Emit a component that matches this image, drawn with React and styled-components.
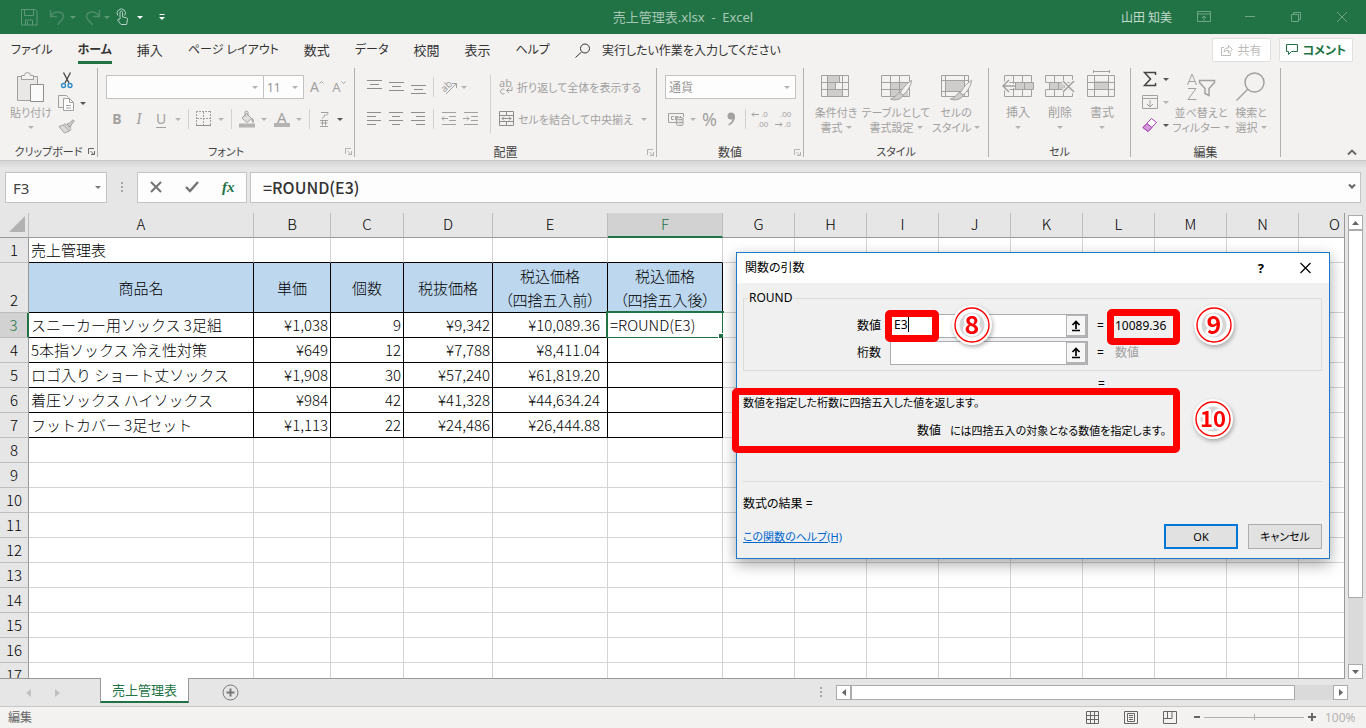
import React from 'react';
import styled, { createGlobalStyle, css } from 'styled-components';

const GlobalStyle = createGlobalStyle`
  * { box-sizing: border-box; }
  html, body, #root { height: 100%; }
  body {
    margin: 0;
    overflow: hidden;
    font-family: 'Noto Sans', 'Noto Sans CJK JP', sans-serif;
    font-size: 12px;
    color: #333333;
  }
  button, input, select { font: inherit; color: inherit; }
  button { font-feature-settings: 'palt'; }
`;

const Window = styled.div`
  display: flex;
  flex-direction: column;
  height: 100vh;
  background: #e6e6e6;
`;

const Svg = styled.svg`
  display: block;
  flex: none;
  overflow: visible;
  fill: none;
  stroke: currentColor;
`;

const Icon = ({ w = 16, h = w, children, ...rest }) => (
  <Svg width={w} height={h} viewBox={`0 0 ${w} ${h}`} aria-hidden="true" {...rest}>
    {children}
  </Svg>
);

const Caret = styled.span`
  flex: none;
  width: 0;
  height: 0;
  border: 3px solid transparent;
  border-top-color: ${props => props.$color || '#b5b3b1'};
  border-bottom-width: 0;
`;

const PlainButton = styled.button`
  display: flex;
  align-items: center;
  justify-content: center;
  gap: ${props => props.$gap || 0}px;
  padding: 0;
  border: 0;
  background: none;
  color: ${props => props.$color || 'inherit'};
  white-space: nowrap;
`;

/* title bar */

const TitleBar = styled.header`
  display: grid;
  grid-template-columns: 1fr auto 1fr;
  align-items: center;
  height: 34px;
  flex: none;
  background: #217346;
  color: #a6c7b5;
`;

const QuickAccess = styled.div`
  display: flex;
  align-items: center;
  gap: 5px;
  padding-left: 21px;
`;

const TitleText = styled.div`
  font-size: 13px;
  line-height: 18px;
  white-space: pre;
`;

const WindowButtons = styled.div`
  display: flex;
  align-items: center;
  justify-content: flex-end;
  gap: 32px;
  padding-right: 17px;
`;

const UserName = styled.span`
  margin-right: -7px;
  color: #c3dacd;
`;

/* tabs */

const TabRow = styled.nav`
  display: flex;
  align-items: center;
  height: 32px;
  flex: none;
  padding: 0 13px 0 11px;
  background: #f3f2f1;
`;

const TabButton = styled.button`
  height: 27px;
  margin-right: 25px;
  padding: 0;
  border: 0;
  border-top: 3px solid transparent;
  border-bottom: 3px solid ${props => (props.$active ? '#217346' : 'transparent')};
  background: none;
  font-size: ${props => (props.$kanji ? 13 : 12)}px;
  font-weight: ${props => (props.$active ? 700 : 400)};
  line-height: 20px;
  white-space: nowrap;
`;

const TellMe = styled.label`
  display: flex;
  align-items: center;
  gap: 11px;
  flex: 1;
`;

const TellMeInput = styled.input`
  width: 220px;
  padding: 0;
  border: 0;
  background: none;
  font-feature-settings: 'palt';
  &::placeholder { color: #333333; opacity: 1; }
`;

const ShareButton = styled.button`
  display: flex;
  align-items: center;
  gap: 5px;
  height: 24px;
  margin-left: 8px;
  padding: 0 ${props => (props.$active ? 6 : 8)}px;
  border: 1px solid #e1dfdd;
  border-radius: 2px;
  background: #ffffff;
  color: ${props => (props.$active ? '#217346' : '#bdbbb9')};
  font-weight: ${props => (props.$active ? 700 : 400)};
  white-space: nowrap;
`;

/* ribbon */

const Ribbon = styled.div`
  display: flex;
  align-items: flex-start;
  height: 95px;
  flex: none;
  padding-top: 2px;
  background: #f3f2f1;
  border-bottom: 1px solid #c8c8c8;
  color: #a3a19f;
`;

const Group = styled.section`
  display: flex;
  flex-direction: column;
  flex: none;
  width: ${props => props.$width}px;
  height: 89px;
  border-right: 1px solid #b3b0ad;
`;

const GroupBody = styled.div`
  display: flex;
  flex: 1;
  padding: ${props => props.$pad || '4px 8px 0'};
  gap: ${props => props.$gap || 0}px;
`;

const GroupFooter = styled.div`
  display: grid;
  grid-template-columns: 12px 1fr 12px;
  align-items: center;
  height: 16px;
  margin-bottom: -2px;
  color: #444444;
  font-size: ${props => (props.$kana ? 11 : 12)}px;
  text-align: center;
  font-feature-settings: 'palt';
  span { grid-column: 2; white-space: nowrap; }
`;

const Rows = styled.div`
  display: flex;
  flex-direction: column;
  gap: ${props => props.$gap || 8}px;
`;

const ToolRow = styled.div`
  display: flex;
  align-items: center;
  height: ${props => props.$h || 24}px;
  gap: ${props => props.$gap || 0}px;
  padding-left: ${props => props.$indent || 0}px;
`;

const Divider = styled.span`
  width: 1px;
  flex: none;
  height: ${props => props.$h || 20}px;
  margin: 0 ${props => props.$after || 0}px 0 ${props => props.$before || 0}px;
  background: #d2d0ce;
`;

const SelectBox = styled.span`
  position: relative;
  display: inline-flex;
  align-items: center;
  width: ${props => props.$width}px;
  height: ${props => props.$h || 24}px;
  flex: none;
  margin-left: ${props => (props.$joined ? '-1px' : 0)};
  border: 1px solid #c4c2c0;
  background: #fdfdfd;
  > span {
    position: absolute;
    right: 5px;
    pointer-events: none;
  }
`;

const Select = styled.select`
  appearance: none;
  width: 100%;
  height: 100%;
  padding: 0 ${props => props.$pad || 3}px;
  border: 0;
  background: none;
  color: ${props => props.$color || '#979593'};
  font-size: ${props => props.$size || 12}px;
`;

const Letter = styled.span`
  font-size: ${props => props.$size || 14}px;
  line-height: 16px;
  ${props => props.$bold && css`font-weight: 700;`}
  ${props => props.$italic && css`font-style: italic; font-family: 'Liberation Serif', serif;`}
  ${props => props.$underline && css`border-bottom: 1px solid;`}
  ${props => props.$bar && css`border-bottom: 4px solid #b5b3b1; padding: 0 3px; line-height: 12px;`}
`;

const LetterButton = styled(PlainButton)`
  width: ${props => props.$width || 22}px;
`;

const TextButton = styled(PlainButton)`
  font-size: 11px;
`;

const BigButton = styled.button`
  display: flex;
  flex-direction: column;
  align-items: center;
  flex: none;
  width: ${props => props.$width}px;
  padding: 0;
  border: 0;
  background: none;
  font-size: ${props => (props.$kanji ? 12 : 11)}px;
  line-height: 15px;
  white-space: nowrap;
  svg { margin-bottom: 2px; }
`;

const LabelLine = styled.span`
  display: flex;
  align-items: center;
  justify-content: center;
  gap: 3px;
  height: 15px;
`;

const CollapseButton = styled(PlainButton)`
  align-self: flex-end;
  margin: 0 9px 4px auto;
  color: #666666;
`;

const grey = '#cfcdcb';

const Launcher = ({ dark }) => (
  <PlainButton $color={dark ? '#666666' : '#b5b3b1'} aria-label="詳細">
    <Icon w={9} h={9}><path d="M1.5 7V1.5H7M3.5 4l3 3M7.5 4v3.5H4" /></Icon>
  </PlainButton>
);

const RibbonGroup = ({ label, width, pad, gap, kana, launcher, darkLauncher, children }) => (
  <Group $width={width}>
    <GroupBody $pad={pad} $gap={gap}>{children}</GroupBody>
    <GroupFooter $kana={kana}>
      <span>{label}</span>
      {launcher && <Launcher dark={darkLauncher} />}
    </GroupFooter>
  </Group>
);

const alignShapes = {
  top: 'M0 1.5h15M3 5.5h9M0 9.5h15',
  middle: 'M0 3.5h15M3 7.5h9M0 11.5h15',
  bottom: 'M0 6.5h15M3 10.5h9M0 14.5h15',
  left: 'M0 1.5h14M0 5.5h9M0 9.5h14M0 13.5h9',
  center: 'M0 1.5h14M3 5.5h8M0 9.5h14M3 13.5h8',
  right: 'M0 1.5h14M5 5.5h9M0 9.5h14M5 13.5h9',
};

const AlignButton = ({ kind }) => (
  <LetterButton $width={22} aria-label={kind}>
    <Icon w={15} h={16}><path d={alignShapes[kind]} stroke="#8f8d8b" /></Icon>
  </LetterButton>
);

const PasteIcon = () => (
  <Icon w={28} h={31}>
    <path d="M.5 4.5h20v24H.5z" fill="#e9e8e7" />
    <path d="M4.5 7.5v-4h3a3 3 0 0 1 6 0h3v4z" fill="#f3f2f1" />
    <path d="M13.5 12.5h13v17h-13z" fill="#fafafa" stroke="#8f8d8b" />
  </Icon>
);

const CutIcon = () => (
  <Icon w={12} h={17}>
    <path d="M2.5.5 8 11M9.5.5 4 11" stroke="#444444" strokeWidth="1.3" />
    <circle cx="2.5" cy="13.5" r="2" stroke="#2b88c9" strokeWidth="1.3" />
    <circle cx="9" cy="13.5" r="2" stroke="#2b88c9" strokeWidth="1.3" />
  </Icon>
);

const CopyIcon = () => (
  <Icon w={17} h={17} stroke="#333333">
    <path d="M5 12.500H.5V.5h8l2 2" />
    <path d="M5.500 3.500h6l4 4v8h-10z" fill="#ffffff" />
    <path d="M11.500 3.500v4h4M8 10.500h5M8 13h5" />
  </Icon>
);

const BrushIcon = () => (
  <Icon w={17} h={16}>
    <path d="m9 5 2.500-1L15 .8l1.300 1.300L13 6l-.5 2.500z" fill={grey} />
    <path d="m7 4.500 6 6-1.500 1.500-6-6zM5.500 6 1 7.500 6.500 14l5-2" fill="#dddbd9" />
  </Icon>
);

const BordersIcon = () => (
  <Icon w={16} h={16}>
    <path d="M.5 0v14M14.500 0v14M0 .5h15M7.500 1v13M1 7.500h13" strokeDasharray="2 1" />
    <path d="M0 14.500h15" stroke="#8f8d8b" />
  </Icon>
);

const FillIcon = () => (
  <Icon w={17} h={17}>
    <path d="m7.500 2.500 5 5-4.500 4-5-4.500zM6 6V1.500a1.500 1.500 0 0 1 3 0V5M13 7c2 2 1.500 4 1 4.500-.8-.5-1.200-2-1-4.500z" fill="#e3e1df" />
    <path d="M0 14.500h16" stroke="#b5b3b1" strokeWidth="4" />
  </Icon>
);

const RubyIcon = () => (
  <Icon w={13} h={17}>
    <path
      transform="translate(3 0)"
      d="M1 1.500h7c0 2-1 2.500-2.500 3M4.500 3.500c0 2-.5 3-2.500 4M0 9.500h8M2.500 9.500v5M5.500 9.500v5M.5 12h7M0 15.500h8"
    />
  </Icon>
);

const OrientationIcon = () => (
  <Icon w={17} h={16}>
    <text x="0" y="11" fontSize="10" fill="currentColor" stroke="none" transform="rotate(-45 5 8)">ab</text>
    <path d="m5 15 10-10M11 4.500h4.500V9" />
  </Icon>
);

const WrapIcon = () => (
  <Icon w={15} h={17}>
    <text x="0" y="8" fontSize="11" fill="currentColor" stroke="none">ab</text>
    <path d="M5.500 10.500a2.500 2.500 0 1 0 0 4M13 8v3.500H7.500M10 9l-2.500 2.500L10 14" />
  </Icon>
);

const MergeIcon = () => (
  <Icon w={16} h={16}>
    <path d="M.5.5h14v14H.5zM.5 4.500h14M.5 10.500h14M7.500.5v4M7.500 10.500v4M3 7.500h9M5 5.500l-2 2 2 2M10 5.500l2 2-2 2" stroke="#8f8d8b" />
  </Icon>
);

const IndentIcon = ({ flip }) => (
  <Icon w={16} h={16}>
    <path d="M1 1.500h14M8 5.500h7M8 9.500h7M1 13.500h14" />
    <path d={flip ? 'M0 7.500h6M4 5.500l2 2-2 2' : 'M1 7.500h6M3 5.500l-2 2 2 2'} />
  </Icon>
);

const CurrencyIcon = () => (
  <Icon w={17} h={15}>
    <path d="M8 10.500H.5v-9h15V5M6 4.500H3.500v3H6M7.500 8V4.500H10v1.500H8M12.500 4v1.500" />
    <path d="M8.500 6.500v6c0 1.500 6.500 1.500 6.500 0v-6c0-1.500-6.500-1.500-6.500 0 0 1.500 6.500 1.500 6.500 0M8.500 9.500c0 1.500 6.500 1.500 6.500 0" fill="#e3e1df" />
  </Icon>
);

const DecimalIcon = ({ less }) => (
  <Icon w={17} h={18}>
    <g fill="currentColor" stroke="none" fontFamily="'Liberation Sans', sans-serif" fontSize="8">
      <text x={less ? 5 : 9} y="7">{less ? '.00' : '.0'}</text>
      <text x={less ? 9 : 5} y="17">{less ? '.0' : '.00'}</text>
    </g>
    <path d={less ? 'M0 14.500h7M5 12.500l2 2-2 2' : 'M0 4.500h7M2 2.500l-2 2 2 2'} />
  </Icon>
);

const Brush = () => (
  <>
    <path d="M30.500 7.500c-4 2-9 8-11 12l2.500 2.500c4-3 8-9 8.500-14.500z" fill="#f3f2f1" />
    <path d="M19 19.500c-3 0-3.500 5-9.500 6.500 4 2 11.500.5 12.500-4z" fill={grey} />
  </>
);

const ConditionalIcon = () => (
  <Icon w={30} h={30}>
    <path d="M6 2h12v7H6zM6 9h8v7H6zM6 16h15v8H6z" fill={grey} stroke="none" />
    <path d="M.5 2.500h27v21H.5zM6.500 2.500v21M21.500 2.500v21M.5 9.500h27M.5 16.500h27M18.500 2.500v7M14.500 9.500v7" />
  </Icon>
);

const TableFormatIcon = () => (
  <Icon w={31} h={30}>
    <path d="M9 9h18v14H9z" fill={grey} stroke="none" />
    <path d="M.5 2.500h28v21H.5zM9.500 2.500v21M18.500 2.500v21M.5 9.500h28M.5 16.500h28" />
    <Brush />
  </Icon>
);

const CellStyleIcon = () => (
  <Icon w={31} h={30}>
    <path d="M5 7h18v12H5z" fill={grey} stroke="none" />
    <path d="M.5 2.500h27v21H.5zM4.500 2.500v21M23.500 2.500v21M.5 7.500h27M.5 18.500h27" />
    <Brush />
  </Icon>
);

const InsertCellsIcon = () => (
  <Icon w={32} h={30}>
    <path d="M2.500 2.500h27v21h-27zM11.500 2.500v21M20.500 2.500v21M2.500 9.500h27M2.500 16.500h27" />
    <path d="M13.500 9.500h18v7h-18zM22.500 9.500v7" fill={grey} />
    <path d="M13 13H1M7 7l-6 6 6 6" stroke="#f3f2f1" strokeWidth="4" />
    <path d="M13 13H1M7 7l-6 6 6 6" strokeWidth="1.500" />
  </Icon>
);

const DeleteCellsIcon = () => (
  <Icon w={32} h={30}>
    <path d="M1.500 9V2.500h27V9M10.500 2.500v7M19.500 2.500v7M1.500 9.500h27M1.500 17v6.500h27V17M10.500 16.500v7M19.500 16.500v7M1.500 16.500h27" />
    <path d="M5.500 9.500h9v7h-9zM14.500 9.500h6v7h-6z" fill={grey} />
    <path d="m19 8 11 11M30 8 19 19" stroke="#f3f2f1" strokeWidth="4" />
    <path d="m19 8 11 11M30 8 19 19" strokeWidth="1.500" />
  </Icon>
);

const FormatCellsIcon = () => (
  <Icon w={30} h={30}>
    <path d="M7 8h14v8H7z" fill={grey} stroke="none" />
    <path d="M.5 2.500h27v21H.5zM7.500 2.500v21M21.500 2.500v21M.5 9.500h27M.5 16.500h27M6.500-1.500h16M6.500-3v3M22.500-3v3" />
  </Icon>
);

const SortIcon = () => (
  <Icon w={30} h={30}>
    <path d="m1.500 12 4.500-11 4.500 11M3 8.500h6M2 15.500h8l-8 11h8.500" />
    <path d="M13.500 7.500h15v2l-5.500 6v7l-4-2v-5l-5.500-6z" strokeWidth="1.500" />
  </Icon>
);

const FindIcon = () => (
  <Icon w={30} h={30}>
    <circle cx="18.500" cy="9.500" r="9.500" strokeWidth="1.500" />
    <path d="m11.500 16.500-11 11" strokeWidth="1.500" />
  </Icon>
);

const Label = ({ lines, caret, below }) => (
  <>
    {lines.map((line, i) => (
      <LabelLine key={line}>
        {line}
        {caret && i === lines.length - 1 && <Caret />}
      </LabelLine>
    ))}
    {below && <LabelLine><Caret /></LabelLine>}
  </>
);

/* formula bar */

const FormulaBar = styled.div`
  display: flex;
  align-items: center;
  height: 52px;
  flex: none;
  padding: 1px 5px 0;
  background: linear-gradient(#d6d6d6, #e6e6e6 7px);
`;

const Grip = styled.span`
  width: 2px;
  height: 11px;
  margin: 0 14px 0;
  background: repeating-linear-gradient(#a8a8a8 0 2px, transparent 2px 4px);
`;

const FormulaButtons = styled.div`
  display: flex;
  align-items: center;
  justify-content: space-around;
  width: 110px;
  height: 31px;
  margin-right: 3px;
  padding-bottom: 2px;
  border: 1px solid #c4c4c4;
  background: #fdfdfd;
  color: #737373;
`;

const FormulaField = styled.div`
  display: flex;
  align-items: center;
  flex: 1;
  height: 31px;
  padding: 0 4px 2px 12px;
  border: 1px solid #c4c4c4;
  background: #fdfdfd;
`;

const FormulaInput = styled.input`
  flex: 1;
  padding: 0;
  border: 0;
  outline: 0;
  background: none;
  font-family: 'Noto Sans CJK JP', sans-serif;
  font-size: 16px;
  font-weight: 500;
`;

/* sheet */

const SheetArea = styled.main`
  position: relative;
  display: flex;
  flex: 1;
  min-height: 0;
`;

const GridView = styled.div`
  flex: 1;
  min-width: 0;
  overflow: hidden;
  border-right: 1px solid #999999;
  border-bottom: 1px solid #999999;
  background: #ffffff;
`;

const Grid = styled.table`
  table-layout: fixed;
  width: 1371px;
  border-collapse: separate;
  border-spacing: 0;
  font-family: 'Noto Sans CJK JP', sans-serif;
  font-size: 15px;
  font-weight: 300;
  line-height: 22px;
  color: #000000;
`;

const ColHead = styled.th`
  height: 25px;
  padding: 0;
  border-right: 1px solid #bdbdbd;
  border-bottom: ${props => (props.$active ? '2px solid #217346' : '1px solid #999999')};
  background: ${props => (props.$active ? '#d2d2d2' : '#e6e6e6')};
  color: ${props => (props.$active ? '#217346' : '#000000')};
  font-weight: inherit;
  vertical-align: top;
`;

const RowHead = styled.th`
  height: ${props => (props.$tall ? 50 : 25)}px;
  padding: 0 0 1px;
  border-right: ${props => (props.$active ? '2px solid #217346' : '1px solid #999999')};
  border-bottom: 1px solid #bdbdbd;
  background: ${props => (props.$active ? '#d2d2d2' : '#e6e6e6')};
  color: ${props => (props.$active ? '#217346' : '#000000')};
  font-weight: inherit;
  vertical-align: bottom;
`;

const Cell = styled.td`
  position: relative;
  padding: 0 ${props => (props.$wide ? 7 : 2)}px 1px 2px;
  border-right: 1px solid ${props => (props.$boxed ? '#000000' : '#d4d4d4')};
  border-bottom: 1px solid ${props => (props.$boxed || props.$underlined ? '#000000' : '#d4d4d4')};
  background: #ffffff;
  text-align: ${props => props.$align || 'left'};
  white-space: pre;
  ${props => props.$header && css`
    padding: 0;
    background: #bdd7ee;
    font-feature-settings: 'palt';
    line-height: 24px;
  `}
`;

const ActiveFrame = styled.span`
  position: absolute;
  inset: -2px -2px -2px -2px;
  border: 2px solid #217346;
  pointer-events: none;
  &::after {
    content: '';
    position: absolute;
    right: -3px;
    bottom: -3px;
    width: 6px;
    height: 6px;
    border: solid #ffffff;
    border-width: 1px 0 0 1px;
    background: #217346;
  }
`;

const Corner = styled.span`
  display: block;
  width: 0;
  height: 0;
  margin: 3px 3px 0 auto;
  border: 8px solid #b2b2b2;
  border-top-color: transparent;
  border-left-color: transparent;
`;

const VScroll = styled.div`
  display: flex;
  flex-direction: column;
  width: 15px;
  flex: none;
  margin: 2px 3px 0;
  background: #dadada;
`;

const HScroll = styled.div`
  display: flex;
  width: 512px;
  height: 15px;
  background: #dadada;
`;

const ScrollArrow = styled.button`
  display: flex;
  align-items: center;
  justify-content: center;
  width: 15px;
  height: 15px;
  flex: none;
  padding: 0;
  border: 1px solid #ababab;
  background: #ffffff;
  color: #666666;
`;

const Thumb = styled.span`
  flex: ${props => props.$grow} 0 0;
  border: 1px solid #ababab;
  background: #ffffff;
`;

const Track = styled.span`
  flex: ${props => props.$grow} 0 0;
`;

/* bottom bars */

const SheetTabs = styled.div`
  display: flex;
  align-items: center;
  height: 28px;
  flex: none;
  padding: 0 18px 0 26px;
  border-bottom: 1px solid #c6c6c6;
`;

const SheetArrows = styled.div`
  display: flex;
  gap: 24px;
`;

const SheetTab = styled.button`
  position: relative;
  align-self: flex-start;
  height: 25px;
  margin: -1px 33px 0 40px;
  padding: 0 11px;
  border: solid #999999;
  border-width: 0 1px;
  border-bottom: 2px solid #217346;
  background: #ffffff;
  color: #217346;
  font-size: 13px;
  white-space: nowrap;
`;

const Spacer = styled.span`
  flex: 1;
`;

const StatusBar = styled.footer`
  display: flex;
  align-items: center;
  height: 21px;
  flex: none;
  padding: 0 8px 1px;
  background: #f3f2f1;
  color: #666666;
`;

const ViewButtons = styled.div`
  display: flex;
  gap: 25px;
  margin-left: auto;
  margin-right: 17px;
`;

const ZoomSlider = styled.input`
  appearance: none;
  width: 100px;
  height: 12px;
  margin: 0 4px;
  background:
    linear-gradient(#b1b1b1, #b1b1b1) 50% 50% / 1px 6px no-repeat,
    linear-gradient(#b1b1b1, #b1b1b1) 50% 50% / 100% 1px no-repeat;
  &::-webkit-slider-thumb { appearance: none; width: 0; height: 0; }
`;

const ZoomText = styled.span`
  width: 33px;
  margin-left: 9px;
  color: #b5b3b1;
`;

/* dialog */

const Dialog = styled.div`
  position: absolute;
  left: 736px;
  top: 39px;
  width: 594px;
  border: 1px solid #1979ca;
  background: #f0f0f0;
  color: #000000;
  font-size: 12px;
  line-height: 16px;
  box-shadow: 0 5px 14px rgba(0, 0, 0, 0.35);
  font-feature-settings: 'palt';
`;

const DialogTitle = styled.div`
  display: flex;
  align-items: center;
  gap: 36px;
  height: 30px;
  padding: 0 18px 0 8px;
  background: #ffffff;
`;

const DialogName = styled.span`
  flex: 1;
`;

const DialogBody = styled.div`
  padding: 7px 7px 9px 6px;
`;

const ArgFieldset = styled.fieldset`
  display: flex;
  flex-direction: column;
  gap: 3px;
  min-width: 0;
  margin: 0;
  padding: 8px 0 5px;
  border: 1px solid #dcdcdc;
  legend { margin-left: 4px; padding: 0 1px; }
`;

const ArgRow = styled.div`
  display: grid;
  grid-template-columns: 137px 198px 8px 1fr;
  align-items: center;
  column-gap: 9px;
  height: 24px;
  label { text-align: right; }
`;

const ArgField = styled.div`
  display: flex;
  height: 24px;
  border: 1px solid #abadb3;
  background: #ffffff;
`;

const ArgInput = styled.input`
  flex: 1;
  min-width: 0;
  padding: 0 0 2px 3px;
  border: 0;
  outline: 0;
  background: none;
  ${props => props.$editing && css`
    background: linear-gradient(#000000, #000000) 17px 2px / 1px 15px no-repeat;
  `}
`;

const PickButton = styled.button`
  display: flex;
  align-items: center;
  justify-content: center;
  width: 21px;
  padding: 0;
  border: 2px solid #b4b4b4;
  border-width: 1px 2px 2px 1px;
  background: #f6f6f6;
`;

const ArgValue = styled.span`
  padding-left: 1px;
  color: ${props => (props.$dim ? '#a0a0a0' : '#000000')};
`;

const TotalLine = styled.div`
  margin-top: 5px;
  padding-left: 355px;
`;

const Description = styled.div`
  margin-top: 3px;
  font-size: 11px;
  white-space: nowrap;
`;

const ArgDescription = styled.div`
  display: flex;
  gap: 9px;
  margin-top: 12px;
  padding: 0 0 42px 174px;
  border-bottom: 1px solid #dcdcdc;
  font-size: 11px;
  white-space: nowrap;
`;

const ArgName = styled.span`
  font-size: 12px;
`;

const Result = styled.div`
  margin-top: 14px;
`;

const DialogFooter = styled.div`
  display: flex;
  align-items: center;
  gap: 10px;
  margin-top: 12px;
  font-size: 11px;
  a { margin-right: auto; color: #0066cc; }
`;

const DialogButton = styled.button`
  width: 74px;
  height: 25px;
  padding: 0;
  border: ${props => (props.$primary ? '2px solid #0078d7' : '1px solid #adadad')};
  background: #e1e1e1;
`;

/* red frames and numbered badges lie over the dialog */

const Frame = styled.span`
  position: absolute;
  left: ${props => props.$x}px;
  top: ${props => props.$y}px;
  width: ${props => props.$w}px;
  height: ${props => props.$h}px;
  border: 7px solid #ff0000;
  border-radius: 5px;
  pointer-events: none;
`;

const BadgeSvg = styled.svg`
  position: absolute;
  left: ${props => props.$x}px;
  top: ${props => props.$y}px;
  width: 48px;
  height: 48px;
  pointer-events: none;
  filter: drop-shadow(1px 2px 2px rgba(0, 0, 0, 0.3));
`;

const Badge = ({ x, y, n }) => (
  <BadgeSvg $x={x} $y={y} viewBox="0 0 48 48">
    <circle cx="24" cy="24" r="20" fill="#ffffff" />
    <circle cx="24" cy="24" r="12.500" fill="#d6d6d6" />
    <circle cx="24" cy="24" r="17" fill="none" stroke="#ff0000" strokeWidth="1.400" />
    <text
      x="24"
      y={n.length > 1 ? 32 : 33}
      textAnchor="middle"
      fontFamily="'Noto Sans CJK JP', sans-serif"
      fontSize={n.length > 1 ? 22 : 25}
      fontWeight="700"
      fill="#ff0000"
      stroke="#ffffff"
      strokeWidth="5"
      strokeLinejoin="round"
      paintOrder="stroke"
    >
      {n}
    </text>
  </BadgeSvg>
);

const tabs = [
  { label: 'ファイル' },
  { label: 'ホーム', active: true },
  { label: '挿入', kanji: true },
  { label: 'ページ レイアウト' },
  { label: '数式', kanji: true },
  { label: 'データ' },
  { label: '校閲', kanji: true },
  { label: '表示', kanji: true },
  { label: 'ヘルプ' },
];

const columns = [
  { name: 'A', width: 225 },
  { name: 'B', width: 77 },
  { name: 'C', width: 73 },
  { name: 'D', width: 89 },
  { name: 'E', width: 115 },
  { name: 'F', width: 115 },
  ...'GHIJKLMNO'.split('').map(name => ({ name, width: 72 })),
];

const data = {
  1: ['売上管理表'],
  2: ['商品名', '単価', '個数', '税抜価格', '税込価格\n（四捨五入前）', '税込価格\n（四捨五入後）'],
  3: ['スニーカー用ソックス 3足組', '¥1,038', '9', '¥9,342', '¥10,089.36', '=ROUND(E3)'],
  4: ['5本指ソックス 冷え性対策', '¥649', '12', '¥7,788', '¥8,411.04'],
  5: ['ロゴ入り ショート丈ソックス', '¥1,908', '30', '¥57,240', '¥61,819.20'],
  6: ['着圧ソックス ハイソックス', '¥984', '42', '¥41,328', '¥44,634.24'],
  7: ['フットカバー 3足セット', '¥1,113', '22', '¥24,486', '¥26,444.88'],
};

const rowNumbers = Array.from({ length: 17 }, (_, i) => i + 1);

const cellAlign = (row, col) => {
  if (row === 2) return 'center';
  if (row > 2 && col > 0 && col < 5) return 'right';
  return 'left';
};

const SheetGrid = () => (
  <Grid>
    <colgroup>
      <col style={{ width: 29 }} />
      {columns.map(col => <col key={col.name} style={{ width: col.width }} />)}
    </colgroup>
    <thead>
      <tr>
        <ColHead><Corner /></ColHead>
        {columns.map(col => (
          <ColHead key={col.name} $active={col.name === 'F'}>{col.name}</ColHead>
        ))}
      </tr>
    </thead>
    <tbody>
      {rowNumbers.map(row => (
        <tr key={row}>
          <RowHead $active={row === 3} $tall={row === 2}>{row}</RowHead>
          {columns.map((col, i) => (
            <Cell
              key={col.name}
              $align={cellAlign(row, i)}
              $header={row === 2 && i < 6}
              $boxed={row > 1 && row < 8 && i < 6}
              $underlined={row === 1 && i < 6}
              $wide={row > 2 && i === 4}
            >
              {data[row]?.[i]}
              {row === 3 && i === 5 && <ActiveFrame />}
            </Cell>
          ))}
        </tr>
      ))}
    </tbody>
  </Grid>
);

const PickIcon = () => (
  <Icon w={10} h={11} stroke="#000000">
    <path d="M5 9V2M1.500 5 5 1.500 8.500 5M1 10.500h8" strokeWidth="1.700" />
  </Icon>
);

const FunctionDialog = () => (
  <Dialog role="dialog" aria-label="関数の引数">
    <DialogTitle>
      <DialogName>関数の引数</DialogName>
      <PlainButton>
        <Letter $size={13} $bold>?</Letter>
      </PlainButton>
      <PlainButton aria-label="閉じる">
        <Icon w={11} h={12}><path d="m.5 1 10 10M10.500 1l-10 10" strokeWidth="1.200" /></Icon>
      </PlainButton>
    </DialogTitle>
    <DialogBody>
      <ArgFieldset>
        <legend>ROUND</legend>
        <ArgRow>
          <label htmlFor="arg-number">数値</label>
          <ArgField>
            <ArgInput id="arg-number" defaultValue="E3" $editing />
            <PickButton aria-label="範囲を選択"><PickIcon /></PickButton>
          </ArgField>
          <span>=</span>
          <ArgValue>10089.36</ArgValue>
        </ArgRow>
        <ArgRow>
          <label htmlFor="arg-digits">桁数</label>
          <ArgField>
            <ArgInput id="arg-digits" />
            <PickButton aria-label="範囲を選択"><PickIcon /></PickButton>
          </ArgField>
          <span>=</span>
          <ArgValue $dim>数値</ArgValue>
        </ArgRow>
      </ArgFieldset>
      <TotalLine>=</TotalLine>
      <Description>数値を指定した桁数に四捨五入した値を返します。</Description>
      <ArgDescription>
        <ArgName>数値</ArgName>
        <span>には四捨五入の対象となる数値を指定します。</span>
      </ArgDescription>
      <Result>数式の結果 =</Result>
      <DialogFooter>
        <a href="#help">この関数のヘルプ(H)</a>
        <DialogButton $primary>OK</DialogButton>
        <DialogButton>キャンセル</DialogButton>
      </DialogFooter>
    </DialogBody>
    <Frame $x={148} $y={57} $w={54} $h={32} />
    <Frame $x={370} $y={56} $w={73} $h={36} />
    <Frame $x={-5} $y={135} $w={448} $h={65} />
    <Badge x={211} y={48} n="8" />
    <Badge x={453} y={48} n="9" />
    <Badge x={452} y={142} n="10" />
  </Dialog>
);

const Header = () => (
  <TitleBar>
    <QuickAccess>
      <PlainButton $color="#5c9a78" aria-label="保存">
        <Icon w={17} h={17}><path d="M.5.5h14l1.500 1.500v14H.5zM3.500.5v6h9v-6M4.500 16v-5h7v5M6.500 12.500v3" /></Icon>
      </PlainButton>
      <PlainButton $gap={3} $color="#4b8d69" aria-label="元に戻す">
        <Icon w={24} h={17}><path d="M7.500 1v6.500H14M7.500 7.500c4-7 13-5 13 0 0 3-4 5-6 8.500" strokeWidth="1.500" /></Icon>
        <Caret $color="#5c9a78" />
      </PlainButton>
      <PlainButton $gap={1} $color="#4b8d69" aria-label="やり直し">
        <Icon w={22} h={17}><path d="M18.500 1v6.500H12M18.500 7.500c-4-7-13-5-13 0 0 3 4 5 6 8.500" strokeWidth="1.500" /></Icon>
        <Caret $color="#5c9a78" />
      </PlainButton>
      <PlainButton $gap={8} $color="#b5d3c2" aria-label="タッチ">
        <Icon w={14} h={18}>
          <path d="M5 11V4.500a1.300 1.300 0 0 1 2.600 0V9l4 .8c1 .3 1 1 .8 2.200l-.8 4.500H6L2.500 12c.5-1 1.500-1 2.500 0" />
          <path d="M2.800 7.500a4.200 4.200 0 1 1 7 0" />
        </Icon>
        <Caret $color="#ffffff" />
      </PlainButton>
      <PlainButton $color="#ffffff" aria-label="カスタマイズ">
        <Icon w={22} h={8}><path d="M11.500 1.500h5" /><path d="M11 4h6l-3 3z" fill="currentColor" stroke="none" /></Icon>
      </PlainButton>
    </QuickAccess>
    <TitleText>売上管理表.xlsx  -  Excel</TitleText>
    <WindowButtons>
      <UserName>山田 知美</UserName>
      <PlainButton $color="#6fa587" aria-label="リボンの表示">
        <Icon w={14} h={12}><path d="M.5.5h13v10H.5zM.5 3h13M7 10V5M5 7l2-2 2 2" /></Icon>
      </PlainButton>
      <PlainButton $color="#6fa587" aria-label="最小化">
        <Icon w={14} h={12}><path d="M2 5.500h10" /></Icon>
      </PlainButton>
      <PlainButton $color="#6fa587" aria-label="元のサイズ">
        <Icon w={14} h={12}><path d="M2.500 3.500h7v7h-7zM4.500 3.500v-2h7v7h-2" /></Icon>
      </PlainButton>
      <PlainButton $color="#6fa587" aria-label="閉じる">
        <Icon w={14} h={12}><path d="m2 1 10 10M12 1 2 11" /></Icon>
      </PlainButton>
    </WindowButtons>
  </TitleBar>
);

const Tabs = () => (
  <TabRow>
    {tabs.map(tab => (
      <TabButton key={tab.label} $active={tab.active} $kanji={tab.kanji}>{tab.label}</TabButton>
    ))}
    <TellMe>
      <Icon w={16} h={15}><circle cx="10" cy="5.500" r="4.500" /><path d="m6.500 9-6 5.500" /></Icon>
      <TellMeInput placeholder="実行したい作業を入力してください" />
    </TellMe>
    <ShareButton>
      <Icon w={12} h={12}><path d="M3 3.500H.5v8h9V9M3 8c0-3 2-4 4.500-4V1.500l4 4-4 3.500V6.500C5.500 6.500 4 7 3 8z" /></Icon>
      共有
    </ShareButton>
    <ShareButton $active>
      <Icon w={12} h={12}><path d="M.5.500h11v7h-6l-3 3v-3h-2z" /></Icon>
      コメント
    </ShareButton>
  </TabRow>
);

const RibbonBar = () => (
  <Ribbon>
    <RibbonGroup label="クリップボード" width={98} pad="4px 0 0 10px" gap={6} kana launcher darkLauncher>
      <BigButton $width={42}>
        <PasteIcon />
        <Label lines={['貼り付け']} below />
      </BigButton>
      <Rows $gap={7}>
        <ToolRow $h={16} $indent={3}><PlainButton aria-label="切り取り"><CutIcon /></PlainButton></ToolRow>
        <ToolRow $h={17}><PlainButton $gap={5} aria-label="コピー"><CopyIcon /><Caret $color="#555555" /></PlainButton></ToolRow>
        <ToolRow $h={16}><PlainButton aria-label="書式のコピー"><BrushIcon /></PlainButton></ToolRow>
      </Rows>
    </RibbonGroup>

    <RibbonGroup label="フォント" width={257} pad="7px 0 0 8px" kana launcher>
      <Rows>
        <ToolRow>
          <SelectBox $width={158}>
            <Select aria-label="フォント名"><option value="" /></Select>
            <Caret />
          </SelectBox>
          <SelectBox $width={41} $joined>
            <Select aria-label="フォント サイズ"><option>11</option></Select>
            <Caret />
          </SelectBox>
          <LetterButton $width={26} aria-label="拡大">
            <Letter>A</Letter>
            <Icon w={5} h={14}><path d="m.5 3.500 2-2 2 2" /></Icon>
          </LetterButton>
          <LetterButton $width={18} aria-label="縮小">
            <Letter $size={13}>A</Letter>
            <Icon w={5} h={14}><path d="m.5 1.500 2 2 2-2" /></Icon>
          </LetterButton>
        </ToolRow>
        <ToolRow>
          <LetterButton><Letter $bold>B</Letter></LetterButton>
          <LetterButton><Letter $italic $size={16}>I</Letter></LetterButton>
          <LetterButton><Letter $underline>U</Letter></LetterButton>
          <LetterButton $width={12} aria-label="下線"><Caret /></LetterButton>
          <ToolRow $gap={7} $indent={4}>
            <Divider />
            <PlainButton $gap={6} aria-label="罫線"><BordersIcon /><Caret /></PlainButton>
            <Divider />
            <PlainButton $gap={5} aria-label="塗りつぶし"><FillIcon /><Caret /></PlainButton>
            <PlainButton $gap={6}><Letter $bar $size={15}>A</Letter><Caret /></PlainButton>
            <Divider />
            <PlainButton $gap={7} aria-label="ふりがな"><RubyIcon /><Caret $color="#555555" /></PlainButton>
          </ToolRow>
        </ToolRow>
      </Rows>
    </RibbonGroup>

    <RibbonGroup label="配置" width={302} pad="7px 0 0 8px" gap={8} launcher>
      <Rows>
        <ToolRow>
          <AlignButton kind="top" />
          <AlignButton kind="middle" />
          <AlignButton kind="bottom" />
          <Divider $before={4} $after={7} />
          <PlainButton $gap={3} aria-label="方向"><OrientationIcon /><Caret /></PlainButton>
        </ToolRow>
        <ToolRow>
          <AlignButton kind="left" />
          <AlignButton kind="center" />
          <AlignButton kind="right" />
          <Divider $before={4} $after={4} />
          <LetterButton aria-label="インデントを減らす"><IndentIcon /></LetterButton>
          <LetterButton aria-label="インデントを増やす"><IndentIcon flip /></LetterButton>
        </ToolRow>
      </Rows>
      <Divider $h={58} />
      <Rows>
        <ToolRow><TextButton $gap={3}><WrapIcon />折り返して全体を表示する</TextButton></ToolRow>
        <ToolRow>
          <TextButton $gap={3}><MergeIcon />セルを結合して中央揃え</TextButton>
          <LetterButton aria-label="結合の種類"><Caret /></LetterButton>
        </ToolRow>
      </Rows>
    </RibbonGroup>

    <RibbonGroup label="数値" width={147} pad="7px 0 0 8px" launcher>
      <Rows>
        <ToolRow>
          <SelectBox $width={131}>
            <Select aria-label="表示形式"><option>通貨</option></Select>
            <Caret />
          </SelectBox>
        </ToolRow>
        <ToolRow $gap={6} $indent={3}>
          <PlainButton $gap={5} aria-label="通貨"><CurrencyIcon /><Caret /></PlainButton>
          <PlainButton><Letter $size={18}>%</Letter></PlainButton>
          <LetterButton $width={16} aria-label="桁区切り">
            <Icon w={10} h={16}><path d="M5 1.500a3.500 3.500 0 0 0 0 7c1 0 1.500-.3 1.500-.3C6 11 4 12 2.500 13v1.500C6 13.500 9 10 9 5.500 9 3 7.500 1.500 5 1.500z" fill="currentColor" stroke="none" /></Icon>
          </LetterButton>
          <Divider />
          <PlainButton aria-label="小数点以下を増やす"><DecimalIcon /></PlainButton>
          <PlainButton aria-label="小数点以下を減らす"><DecimalIcon less /></PlainButton>
        </ToolRow>
      </Rows>
    </RibbonGroup>

    <RibbonGroup label="スタイル" width={185} pad="5px 0 0 2px" kana>
      <BigButton $width={60}><ConditionalIcon /><Label lines={['条件付き', '書式']} caret /></BigButton>
      <BigButton $width={60}><TableFormatIcon /><Label lines={['テーブルとして', '書式設定']} caret /></BigButton>
      <BigButton $width={60}><CellStyleIcon /><Label lines={['セルの', 'スタイル']} caret /></BigButton>
    </RibbonGroup>

    <RibbonGroup label="セル" width={142} pad="5px 0 0 8px" kana>
      <BigButton $width={42} $kanji><InsertCellsIcon /><Label lines={['挿入']} below /></BigButton>
      <BigButton $width={42} $kanji><DeleteCellsIcon /><Label lines={['削除']} below /></BigButton>
      <BigButton $width={42} $kanji><FormatCellsIcon /><Label lines={['書式']} below /></BigButton>
    </RibbonGroup>

    <RibbonGroup label="編集" width={150} pad="2px 0 0 11px">
      <Rows $gap={5}>
        <ToolRow $h={18}>
          <PlainButton $gap={5} $color="#444444" aria-label="合計">
            <Icon w={16} h={16}><path d="M13.500 4V1.500h-11l6 6.500-6 6.500h11V12" strokeWidth="1.500" /></Icon>
            <Caret $color="#555555" />
          </PlainButton>
        </ToolRow>
        <ToolRow $h={18}>
          <PlainButton $gap={4} aria-label="フィル">
            <Icon w={17} h={15}><path d="M.5.5h15v13H.5zM.5 3.500h15M8 5v7M5 9l3 3 3-3" /></Icon>
            <Caret />
          </PlainButton>
        </ToolRow>
        <ToolRow $h={18}>
          <PlainButton $gap={5} aria-label="クリア">
            <Icon w={16} h={16} color="#a33fae"><path d="m9.500 1.500 5 4-8.500 9-5-4z" fill="#ffffff" /><path d="m5 6.500 5 4-4 4-5-4z" fill="#d597da" /></Icon>
            <Caret $color="#555555" />
          </PlainButton>
        </ToolRow>
      </Rows>
      <GroupBody $pad="3px 0 0 2px">
        <BigButton $width={60}><SortIcon /><Label lines={['並べ替えと', 'フィルター']} caret /></BigButton>
        <BigButton $width={40}><FindIcon /><Label lines={['検索と', '選択']} caret /></BigButton>
      </GroupBody>
    </RibbonGroup>
    <CollapseButton aria-label="リボンを折りたたむ">
      <Icon w={10} h={7}><path d="m1 5.500 4-4 4 4" strokeWidth="1.800" /></Icon>
    </CollapseButton>
  </Ribbon>
);

const App = () => (
  <Window>
    <GlobalStyle />
    <Header />
    <Tabs />
    <RibbonBar />
    <FormulaBar>
      <SelectBox $width={102} $h={31}>
        <Select aria-label="名前ボックス" $color="#444444" $size={15} $pad={7}><option>F3</option></Select>
        <Caret $color="#777777" />
      </SelectBox>
      <Grip />
      <FormulaButtons>
        <PlainButton aria-label="取り消し"><Icon w={12} h={12}><path d="m1 1 10 10M11 1 1 11" strokeWidth="2" /></Icon></PlainButton>
        <PlainButton aria-label="確定"><Icon w={14} h={12}><path d="m1 6 4 4 8-9" strokeWidth="2.400" /></Icon></PlainButton>
        <PlainButton $color="#217346"><Letter $italic $bold $size={15}>fx</Letter></PlainButton>
      </FormulaButtons>
      <FormulaField>
        <FormulaInput aria-label="数式" defaultValue="=ROUND(E3)" />
        <Icon w={8} h={7} color="#666666"><path d="m1 1.500 3 3 3-3" strokeWidth="2" /></Icon>
      </FormulaField>
    </FormulaBar>
    <SheetArea>
      <GridView><SheetGrid /></GridView>
      <VScroll>
        <ScrollArrow aria-label="上へ"><Icon w={7} h={4}><path d="M0 4h7L3.500 0z" fill="currentColor" stroke="none" /></Icon></ScrollArrow>
        <Thumb $grow={368} />
        <Track $grow={66} />
        <ScrollArrow aria-label="下へ"><Icon w={7} h={4}><path d="M0 0h7L3.500 4z" fill="currentColor" stroke="none" /></Icon></ScrollArrow>
      </VScroll>
      <FunctionDialog />
    </SheetArea>
    <SheetTabs>
      <SheetArrows>
        <PlainButton $color="#c0c0c0" aria-label="前のシート"><Icon w={5} h={8}><path d="M5 0v8L0 4z" fill="currentColor" stroke="none" /></Icon></PlainButton>
        <PlainButton $color="#c0c0c0" aria-label="次のシート"><Icon w={5} h={8}><path d="M0 0v8l5-4z" fill="currentColor" stroke="none" /></Icon></PlainButton>
      </SheetArrows>
      <SheetTab>売上管理表</SheetTab>
      <PlainButton $color="#777777" aria-label="新しいシート">
        <Icon w={17} h={17}><circle cx="8.500" cy="8.500" r="7.500" /><path d="M8.500 4.500v8M4.500 8.500h8" strokeWidth="2" /></Icon>
      </PlainButton>
      <Spacer />
      <Grip />
      <HScroll>
        <ScrollArrow aria-label="左へ"><Icon w={4} h={7}><path d="M4 0v7L0 3.500z" fill="currentColor" stroke="none" /></Icon></ScrollArrow>
        <Thumb $grow={444} />
        <Track $grow={38} />
        <ScrollArrow aria-label="右へ"><Icon w={4} h={7}><path d="M0 0v7l4-3.500z" fill="currentColor" stroke="none" /></Icon></ScrollArrow>
      </HScroll>
    </SheetTabs>
    <StatusBar>
      編集
      <ViewButtons>
        <PlainButton aria-label="標準"><Icon w={13} h={13}><path d="M.5.5h12v12H.5zM4.500.5v12M8.500.5v12M.5 4.500h12M.5 8.500h12" /></Icon></PlainButton>
        <PlainButton aria-label="ページ レイアウト"><Icon w={14} h={13}><path d="M.5.5h13v12H.5zM3.500 2.500h7v8h-7zM5 4.500h4M5 6.500h4M5 8.500h4" /></Icon></PlainButton>
        <PlainButton aria-label="改ページ プレビュー"><Icon w={14} h={13}><path d="M.5.5h13v12H.5zM4.500.5v7M9 .5v7M.5 7.500H9" /></Icon></PlainButton>
      </ViewButtons>
      <PlainButton aria-label="縮小"><Icon w={6} h={8}><path d="M0 4h6" strokeWidth="2" /></Icon></PlainButton>
      <ZoomSlider type="range" aria-label="ズーム" />
      <PlainButton aria-label="拡大"><Icon w={8} h={8}><path d="M0 4h8M4 0v8" strokeWidth="2" /></Icon></PlainButton>
      <ZoomText>100%</ZoomText>
    </StatusBar>
  </Window>
);

export default App;
